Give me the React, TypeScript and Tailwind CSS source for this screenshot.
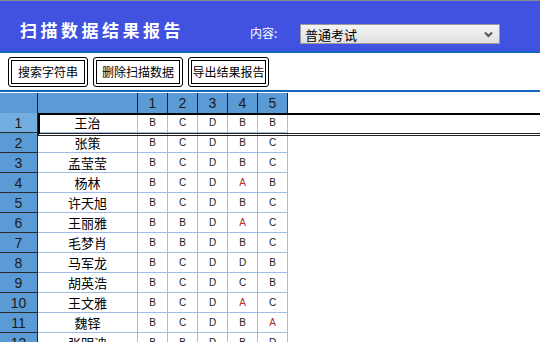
import React from 'react';

type Row = { name: string; answers: string[] };

const rows: Row[] = [
  { name: '王治', answers: ['B', 'C', 'D', 'B', 'B'] },
  { name: '张策', answers: ['B', 'C', 'D', 'B', 'C'] },
  { name: '孟莹莹', answers: ['B', 'C', 'D', 'B', 'C'] },
  { name: '杨林', answers: ['B', 'C', 'D', 'A', 'B'] },
  { name: '许天旭', answers: ['B', 'C', 'D', 'B', 'C'] },
  { name: '王丽雅', answers: ['B', 'B', 'D', 'A', 'C'] },
  { name: '毛梦肖', answers: ['B', 'B', 'D', 'B', 'C'] },
  { name: '马军龙', answers: ['B', 'C', 'D', 'D', 'B'] },
  { name: '胡英浩', answers: ['B', 'C', 'D', 'C', 'B'] },
  { name: '王文雅', answers: ['B', 'C', 'D', 'A', 'C'] },
  { name: '魏铎', answers: ['B', 'C', 'D', 'B', 'A'] },
  { name: '张明迪', answers: ['B', 'B', 'D', 'B', 'D'] },
];

const cjk = "font-['Noto_Sans_CJK_SC',sans-serif]";
const latin = "font-['Liberation_Sans',Arial,sans-serif]";

function ToolButton({ label, width }: { label: string; width: string }) {
  return (
    <div className={`${width} h-[30px] border border-black rounded-[3px] p-[2px] bg-white`}>
      <div className={`h-full border border-black flex items-center justify-center text-[12px] leading-none text-black ${cjk}`}>
        {label}
      </div>
    </div>
  );
}

export default function App() {
  return (
    <div className="w-[540px] h-[342px] overflow-hidden bg-white">
      {/* header */}
      <div className="h-[53px] border-t border-[#8a8a8a] border-b-2 border-b-[#1565c0] bg-[#4152e0] flex items-start">
        <div className={`w-[250px] pl-[20px] mt-[19px] text-[17px] leading-[20px] font-bold tracking-[3.5px] text-white ${cjk}`}>
          扫描数据结果报告
        </div>
        <div className={`w-[50px] mt-[24px] text-[12px] leading-[16px] text-white ${cjk}`}>内容:</div>
        <div className="mt-[23px] w-[200px] h-[20px] border border-[#9a9a9a] bg-gradient-to-b from-[#f4f4f4] to-[#e0e0e0] flex items-center justify-between pl-[4px] pr-[6px]">
          <span className={`text-[13px] leading-none text-black ${cjk}`}>普通考试</span>
          <svg width="9" height="7" viewBox="0 0 9 7">
            <path d="M1 1.5 L4.5 5 L8 1.5" fill="none" stroke="#555" strokeWidth="2" />
          </svg>
        </div>
      </div>

      {/* toolbar */}
      <div className="h-[37px] flex items-start gap-[5px] pl-[8px] pt-[4px]">
        <ToolButton label="搜索字符串" width="w-[80px]" />
        <ToolButton label="删除扫描数据" width="w-[90px]" />
        <ToolButton label="导出结果报告" width="w-[81px]" />
      </div>
      <div className="h-[2px] bg-[#1565c0]" />
      <div className="h-[1px]" />

      {/* grid */}
      <div className="relative">
        <div className={`flex h-[20px] text-[14px] text-[#1a1a1a] ${latin}`}>
          <div className="w-[38px] bg-[#5b9bd5] border-r border-[#222]" />
          <div className="w-[100px] bg-[#5b9bd5] border-r border-[#222]" />
          {[1, 2, 3, 4, 5].map((n) => (
            <div key={n} className="w-[30px] bg-[#5b9bd5] border-r border-[#222] flex items-center justify-center leading-none">
              {n}
            </div>
          ))}
        </div>
        {rows.map((r, i) => (
          <div key={i} className="flex h-[20px]">
            <div
              className={`w-[38px] border-r border-b border-[#2a2a2a] flex items-center justify-center text-[14px] leading-none text-[#1a1a1a] ${latin} ${
                i === 0 ? 'bg-[#74ade0]' : 'bg-[#5b9bd5]'
              }`}
            >
              {i + 1}
            </div>
            <div className={`w-[100px] border-r border-b border-[#9ebbe5] flex items-center justify-center text-[13px] leading-none text-black ${cjk}`}>
              {r.name}
            </div>
            {r.answers.map((a, j) => (
              <div
                key={j}
                className={`w-[30px] border-r border-b border-[#9ebbe5] flex items-center justify-center text-[10px] leading-none ${latin} ${
                  a === 'A' ? 'text-[#b02a2a]' : 'text-[#222]'
                }`}
              >
                {a}
              </div>
            ))}
          </div>
        ))}
        {/* selected row outline */}
        <div className="absolute left-[38px] right-0 top-[20px] h-[23px] border-t-2 border-l-2 border-black border-b-[3px] border-b-[#222] border-double pointer-events-none" />
      </div>
    </div>
  );
}
